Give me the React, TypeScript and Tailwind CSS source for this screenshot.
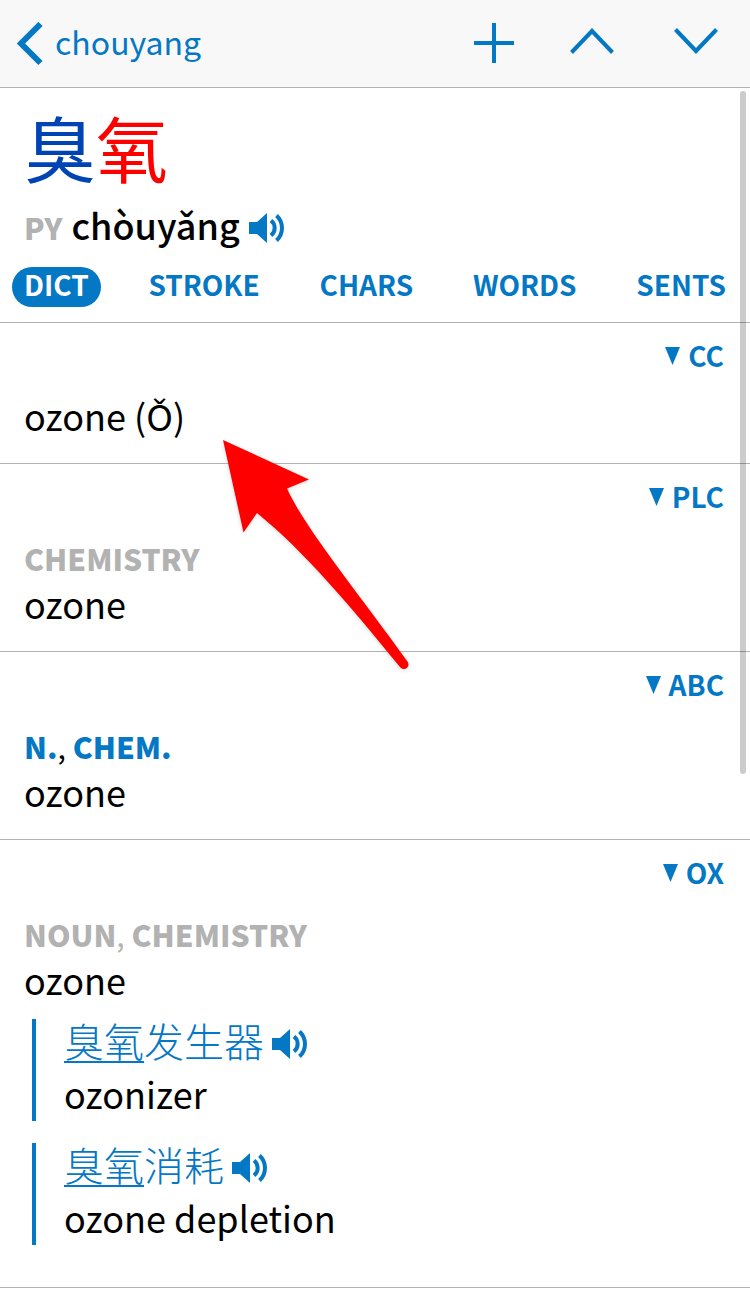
import type { ReactNode } from "react";

const Speaker = ({ word }: { word: string }) => {
  return (
    <button aria-label={"Play " + word} className="cursor-pointer text-[#0478c4]">
      <svg width="36" height="30" viewBox="0 0 36 30" fill="none">
        <path d="M0 9h8L18 0v30L8 21H0z" fill="currentColor" />
        <path
          d="M22 7.500A9.500 9.500 0 0 1 22 22.500M27.500 2.500A17 17 0 0 1 27.500 27.500"
          stroke="currentColor"
          strokeWidth="4"
        />
      </svg>
    </button>
  );
};

const Section = ({ name, children }: { name: string; children: ReactNode }) => {
  return (
    <section className="border-b border-[#b2b2b2] px-6 pt-[9px] pb-[27px]">
      <div className="flex justify-end pr-0.5">
        <button className="flex items-center gap-2 text-[28px] leading-[47px] font-bold text-[#0478c4] cursor-pointer">
          <svg width="15" height="18" viewBox="0 0 15 18" fill="currentColor">
            <path d="M0 0h15L7.500 18z" />
          </svg>
          {name}
        </button>
      </div>
      <div className="mt-[15px] text-[36px] leading-[42px]">{children}</div>
    </section>
  );
};

const Example = ({ rest, meaning }: { rest: string; meaning: string }) => {
  return (
    <div className="ml-2 border-l-4 border-[#0478c4] pl-7">
      <div className="flex h-[46px] items-start gap-2 text-[#0478c4]">
        <p className="text-[40px] leading-[42px] font-light">
          <span className="inline-block border-b-2 border-[#0478c4]">臭氧</span>
          {rest}
        </p>
        <div className="flex pt-[10px]">
          <Speaker word={"臭氧" + rest} />
        </div>
      </div>
      <p className="pt-[7px] pb-[7px] leading-[42px]">{meaning}</p>
    </div>
  );
};

const tabs = ["DICT", "STROKE", "CHARS", "WORDS", "SENTS"];

export default function App() {
  return (
    <div className="relative min-h-screen bg-white text-black font-['Noto_Sans_CJK_SC',sans-serif]">
      <header className="flex h-[88px] items-center justify-between border-b border-[#b2b2b2] bg-[#f8f8f8] pl-4 pr-8 text-[#0478c4]">
        <a href="#" className="flex items-center gap-3 text-[32px] leading-[40px]">
          <svg width="27" height="44" viewBox="0 0 27 44" fill="none">
            <path d="M24.500 2L5 21.500L24.500 41" stroke="currentColor" strokeWidth="6" />
          </svg>
          <span className="pb-1.5">chouyang</span>
        </a>
        <div className="flex items-center gap-[56px]">
          <button aria-label="Add" className="cursor-pointer pb-0.5">
            <svg width="40" height="40" viewBox="0 0 40 40" fill="none">
              <path d="M20 0v40M0 20h40" stroke="currentColor" strokeWidth="4" />
            </svg>
          </button>
          <button aria-label="Previous" className="cursor-pointer pb-1.5">
            <svg width="44" height="28" viewBox="0 0 44 28" fill="none">
              <path d="M1.500 25.500L22 4L42.500 25.500" stroke="currentColor" strokeWidth="4" />
            </svg>
          </button>
          <button aria-label="Next" className="ml-1 cursor-pointer pb-1.5">
            <svg width="44" height="28" viewBox="0 0 44 28" fill="none">
              <path d="M1.500 2.500L22 24L42.500 2.500" stroke="currentColor" strokeWidth="4" />
            </svg>
          </button>
        </div>
      </header>

      <div className="border-b border-[#b2b2b2] pt-5 pb-[15px]">
        <h1 className="px-6 text-[72px] leading-[76px] font-normal">
          <span className="text-[#0043b4]">臭</span>
          <span className="text-[#ff0000]">氧</span>
        </h1>
        <div className="mt-5 flex h-[47px] items-center gap-[9px] px-6 leading-[41px]">
          <span className="text-[30px] font-black text-[#b2b2b2]">PY</span>
          <span className="pb-1.5 text-[36px] font-medium">chòuyǎng</span>
          <Speaker word="chòuyǎng" />
        </div>
        <nav className="mt-4 flex justify-between px-3">
          {tabs.map((tab) => (
            <button
              key={tab}
              className={
                "h-10 cursor-pointer rounded-full px-3 pb-1.5 text-[28px] leading-[34px] font-bold " +
                (tab === "DICT" ? "bg-[#0478c4] text-white" : "text-[#0478c4]")
              }
            >
              {tab}
            </button>
          ))}
        </nav>
      </div>

      <Section name="CC">
        <p>ozone (Ǒ)</p>
      </Section>
      <Section name="PLC">
        <p className="text-[30px] leading-[47px] font-black text-[#b2b2b2]">CHEMISTRY</p>
        <p>ozone</p>
      </Section>
      <Section name="ABC">
        <p className="text-[30px] leading-[47px] font-black text-[#0478c4]">
          N.<span className="font-normal text-black">,</span> CHEM.
        </p>
        <p>ozone</p>
      </Section>
      <Section name="OX">
        <p className="text-[30px] leading-[47px] font-black text-[#b2b2b2]">
          NOUN<span className="font-normal">,</span> CHEMISTRY
        </p>
        <p>ozone</p>
        <div className="mt-[19px] mb-[15px] flex flex-col gap-[22px]">
          <Example rest="发生器" meaning="ozonizer" />
          <Example rest="消耗" meaning="ozone depletion" />
        </div>
      </Section>

      <div className="absolute top-[91px] right-1 h-[683px] w-[6px] rounded-full bg-black/20"></div>

      {/* arrow pointing at the first definition */}
      <svg
        className="pointer-events-none absolute top-[436px] left-[218px] drop-shadow-sm"
        width="196"
        height="240"
        viewBox="218 436 196 240"
      >
        <path
          d="M223 440L309 479.500L287 488.500C306 530 360 595 407.500 661.500C411 667 404 672 400 667C350 606 306 553 257 513L243.500 532.500z"
          fill="#ff0000"
        />
      </svg>
    </div>
  );
}
